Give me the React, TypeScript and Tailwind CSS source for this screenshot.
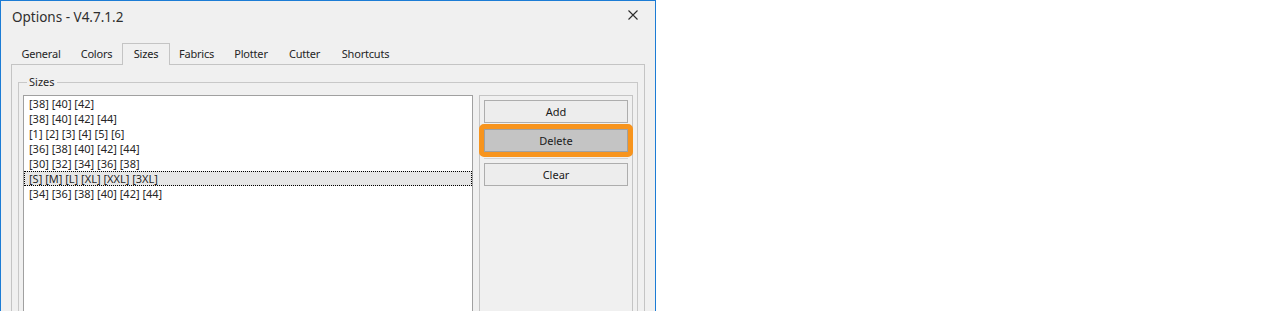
const tabs = [
  { label: "General", cls: "w-[60px]" },
  { label: "Colors", cls: "w-[51px]" },
  { label: "Sizes", cls: "w-[48px]", active: true },
  { label: "Fabrics", cls: "w-[53px]" },
  { label: "Plotter", cls: "w-[56px]" },
  { label: "Cutter", cls: "w-[51px]" },
  { label: "Shortcuts", cls: "w-[71px]" },
];

const sizes = [
  "[38] [40] [42]",
  "[38] [40] [42] [44]",
  "[1] [2] [3] [4] [5] [6]",
  "[36] [38] [40] [42] [44]",
  "[30] [32] [34] [36] [38]",
  "[S] [M] [L] [XL] [XXL] [3XL]",
  "[34] [36] [38] [40] [42] [44]",
];

function CloseIcon() {
  return (
    <svg width="10" height="10" viewBox="0 0 10 10" className="mt-[9px] shrink-0">
      <path d="M0.5 0.5 L9.5 9.5 M9.5 0.5 L0.5 9.5" stroke="#2b2b2b" strokeWidth="1.1" fill="none" />
    </svg>
  );
}

export default function App() {
  return (
    <div className="flex h-[311px] w-full overflow-hidden bg-white font-['Noto_Sans',sans-serif] text-[11px] text-[#262626]">
      <div className="flex w-[656px] shrink-0 flex-col border-x border-t border-[#1c7cd5] bg-[#f0f0f0]">
        {/* title bar */}
        <div className="flex h-[42px] shrink-0 items-start justify-between pl-[11px] pr-[17px]">
          <span className="pt-[6px] text-[13.5px] leading-[20px] text-[#2e2e2e]">Options - V4.7.1.2</span>
          <CloseIcon />
        </div>

        {/* tabs */}
        <div className="flex h-[21px] shrink-0 items-end pl-[10px] tracking-[-0.2px]">
          {tabs.map((t) =>
            t.active ? (
              <div
                key={t.label}
                className={`${t.cls} relative z-10 -mb-px flex h-[22px] items-center justify-center border-x border-t border-[#c4c4c4] bg-[#f0f0f0] pb-[1px] text-[#1a1a1a]`}
              >
                {t.label}
              </div>
            ) : (
              <div key={t.label} className={`${t.cls} flex h-[20px] items-center justify-center`}>
                {t.label}
              </div>
            )
          )}
        </div>

        {/* tab panel */}
        <div className="mx-[10px] shrink-0 border border-[#c4c4c4] px-[6px] pt-[9px]">
          <fieldset className="h-[300px] border border-[#c8c8c8]">
            <legend className="ml-[8px] px-[2px] leading-[16px]">Sizes</legend>
            <div className="mt-[5px] flex gap-[6px] px-[4px]">
              {/* list box */}
              <div className="h-[260px] w-[450px] border border-[#a0a0a0] bg-white">
                {sizes.map((s, i) =>
                  i === 5 ? (
                    <div
                      key={i}
                      className="h-[15px] border border-dotted border-black bg-[#e6e6e6] pl-[4px] leading-[13px] whitespace-nowrap"
                    >
                      {s}
                    </div>
                  ) : (
                    <div key={i} className="h-[15px] pl-[5px] leading-[15px] whitespace-nowrap">
                      {s}
                    </div>
                  )
                )}
              </div>

              {/* buttons */}
              <div className="flex h-[260px] w-[154px] flex-col border border-[#c4c4c4] p-[4px]">
                <button className="h-[23px] w-full border border-[#adadad] bg-[#ededed] leading-[21px] text-[#1a1a1a]">
                  Add
                </button>
                <div className="-mx-[5px] mt-[1px] rounded-[5px] border-[5px] border-[#f7941d]">
                  <button className="block h-[23px] w-full border border-[#a0a0a0] bg-[#c4c4c4] leading-[21px] text-[#1a1a1a]">
                    Delete
                  </button>
                </div>
                <div className="mt-[1px] h-px bg-[#d2d2d2]" />
                <button className="mt-[4px] h-[23px] w-full border border-[#adadad] bg-[#ededed] leading-[21px] text-[#1a1a1a]">
                  Clear
                </button>
              </div>
            </div>
          </fieldset>
        </div>
      </div>
    </div>
  );
}
